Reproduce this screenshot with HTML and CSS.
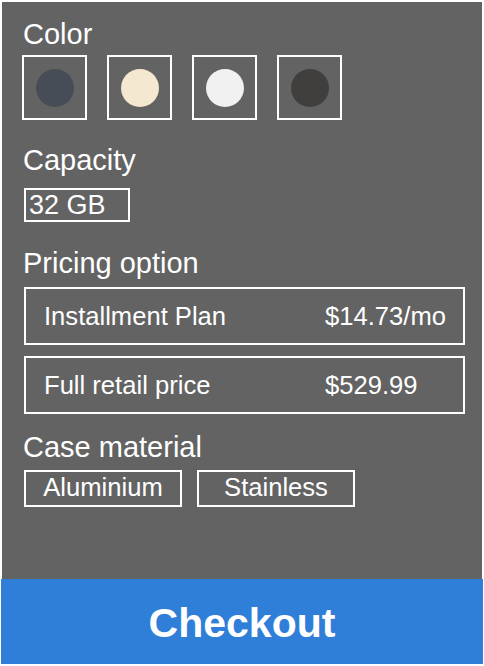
FILE: index.html
```html
<!DOCTYPE html>
<html lang="en">
<head>
<meta charset="utf-8">
<title>Checkout options</title>
<link rel="stylesheet" href="styles.css">
</head>
<body>
<div class="page">
  <div class="panel">
    <section class="group group-color">
      <h2 class="label">Color</h2>
      <div class="swatches">
        <div class="swatch"><span class="dot dot-slate"></span></div>
        <div class="swatch"><span class="dot dot-cream"></span></div>
        <div class="swatch"><span class="dot dot-white"></span></div>
        <div class="swatch"><span class="dot dot-dark"></span></div>
      </div>
    </section>
    <section class="group group-capacity">
      <h2 class="label">Capacity</h2>
      <div class="capacity">32 GB</div>
    </section>
    <section class="group group-pricing">
      <h2 class="label">Pricing option</h2>
      <div class="prices">
        <div class="price-row"><span class="price-name">Installment Plan</span><span class="price-value">$14.73/mo</span></div>
        <div class="price-row"><span class="price-name">Full retail price</span><span class="price-value">$529.99</span></div>
      </div>
    </section>
    <section class="group group-case">
      <h2 class="label">Case material</h2>
      <div class="materials">
        <div class="material">Aluminium</div>
        <div class="material">Stainless</div>
      </div>
    </section>
  </div>
  <button class="checkout">Checkout</button>
</div>
</body>
</html>
```
FILE: styles.css
```css
html, body {
  margin: 0;
  padding: 0;
  background: #ffffff;
}
body {
  font-family: "Liberation Sans", Arial, sans-serif;
  color: #ffffff;
}
.page {
  width: 484px;
  height: 666px;
  display: flex;
  flex-direction: column;
}
.panel {
  margin: 2px 2px 0 2px;
  height: 577px;
  box-sizing: border-box;
  background: #636363;
  padding: 16px 17px 0 20px;
}
.label {
  margin: 0 0 0 1px;
  font-size: 29px;
  line-height: 33px;
  font-weight: normal;
}
.group-capacity { margin-top: 24px; }
.group-pricing { margin-top: 25px; }
.group-case { margin-top: 17px; }

.swatches {
  margin-top: 4px;
  display: flex;
  gap: 20px;
}
.swatch {
  width: 65px;
  height: 65px;
  box-sizing: border-box;
  border: 2px solid #ffffff;
  display: flex;
  align-items: center;
  justify-content: center;
}
.dot {
  width: 38px;
  height: 38px;
  border-radius: 50%;
}
.dot-slate { background: #474d56; }
.dot-cream { background: #f5e8d0; }
.dot-white { background: #f0f1f0; }
.dot-dark { background: #403f3d; }

.capacity {
  margin: 11px 0 0 2px;
  width: 106px;
  height: 34px;
  box-sizing: border-box;
  border: 2px solid #ffffff;
  padding-left: 3px;
  font-size: 27px;
  line-height: 30px;
}

.prices {
  margin: 7px 0 0 2px;
  display: flex;
  flex-direction: column;
  gap: 11px;
}
.price-row {
  width: 441px;
  height: 58px;
  box-sizing: border-box;
  border: 2px solid #ffffff;
  padding-left: 18px;
  display: grid;
  grid-template-columns: 281px 1fr;
  align-items: center;
  font-size: 25.6px;
}

.materials {
  margin: 6px 0 0 2px;
  display: flex;
  gap: 15px;
}
.material {
  width: 158px;
  height: 37px;
  box-sizing: border-box;
  border: 2px solid #ffffff;
  font-size: 25.6px;
  line-height: 31px;
  text-align: center;
}

.checkout {
  margin: 0 1px;
  width: 482px;
  height: 85px;
  border: none;
  padding: 0;
  background: #2f7ed8;
  color: #ffffff;
  font-family: "Liberation Sans", Arial, sans-serif;
  font-weight: bold;
  font-size: 41px;
  line-height: 88px;
  text-align: center;
}
```
